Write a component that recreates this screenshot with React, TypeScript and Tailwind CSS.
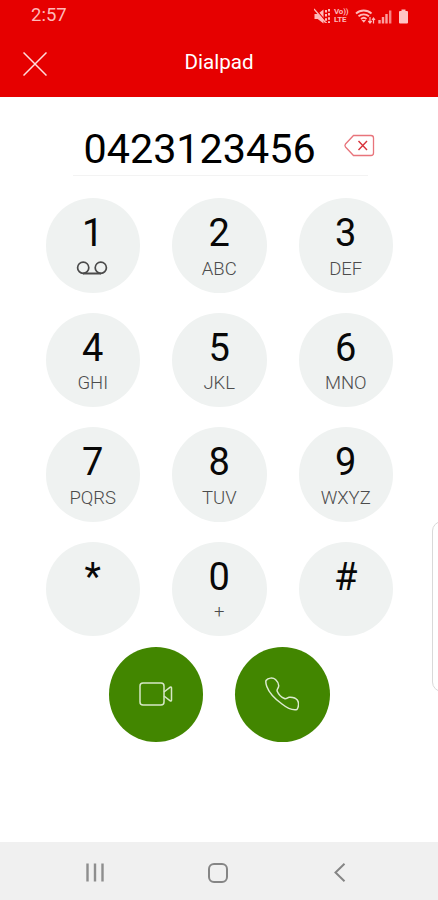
import type { ReactNode } from "react";

const keys: { digit: string; sub: ReactNode }[] = [
  { digit: "1", sub: <VoicemailIcon /> },
  { digit: "2", sub: "ABC" },
  { digit: "3", sub: "DEF" },
  { digit: "4", sub: "GHI" },
  { digit: "5", sub: "JKL" },
  { digit: "6", sub: "MNO" },
  { digit: "7", sub: "PQRS" },
  { digit: "8", sub: "TUV" },
  { digit: "9", sub: "WXYZ" },
  { digit: "*", sub: "" },
  { digit: "0", sub: "+" },
  { digit: "#", sub: "" },
];

function VoicemailIcon() {
  return (
    <svg width="32" height="14" viewBox="0 0 32 14" fill="none" stroke="#4a4a4a" strokeWidth="1.7" className="relative -top-px -left-px">
      <circle cx="7.2" cy="6.7" r="5.6" />
      <circle cx="24.8" cy="6.7" r="5.6" />
      <path d="M7 12.5h18" strokeWidth="2" />
    </svg>
  );
}

function StatusIcons() {
  return (
    <svg width="96" height="20" viewBox="0 0 96 20" fill="none" stroke="#ffb9b9" className="shrink-0">
      {/* Muted speaker */}
      <path d="M0.5 8h3.2L9.5 3.5v14L3.7 13H0.5z" fill="#ffb9b9" stroke="none" />
      <path d="M1 2.5l11 13" stroke="#e60000" strokeWidth="1.2" />
      <path d="M0 3l11.5 13.5" strokeWidth="1.3" />
      <path d="M12 4v13M15 3v14" strokeWidth="2" strokeDasharray="2.5 1.6" />
      {/* Wi-Fi */}
      <path d="M42 7.5c4.5-4 11-4 15.5 0M44.5 10.3c3-2.6 7.5-2.6 10.5 0M47 13c1.6-1.4 4-1.4 5.5 0" strokeWidth="1.8" />
      <path d="M47.5 14h4.5l-2.2 2.7z" fill="#ffb9b9" stroke="none" />
      <path d="M56 11v6M54.3 15l1.7 2 1.7-2M59.5 17.5v-5M58 14l1.5-2 1.5 2" strokeWidth="1.2" />
      {/* Signal */}
      <path d="M65.5 17.5v-3.5M69 17.5v-6.5M72.5 17.5v-9.5" strokeWidth="2.4" opacity="0.85" />
      <path d="M76.2 17.5v-13" strokeWidth="2.4" opacity="0.7" />
      {/* Battery */}
      <path d="M87.5 3.5h4v1.5h1.5q1 0 1 1v10.5q0 1-1 1h-7q-1 0-1-1v-10.5q0-1 1-1h1.5z" fill="#ffc4c4" stroke="none" />
    </svg>
  );
}

function DialKey({ digit, sub }: { digit: string; sub: ReactNode }) {
  return (
    <button className="flex size-[94.5px] flex-col items-center rounded-full bg-[#eff2f1] pt-[16px]">
      <span className="text-[38px] leading-[38px] text-[#080808]">{digit}</span>
      <span className="mt-[6.5px] flex h-5 items-center text-[18.5px] leading-5 font-light text-[#4c4c4c]">
        {sub}
      </span>
    </button>
  );
}

export default function App() {
  return (
    <div className="flex h-[900px] w-[438px] flex-col overflow-hidden bg-white font-[Roboto,sans-serif]">
      <header className="h-[97px] bg-[#e60000]">
        <div className="flex h-8 items-center justify-between pr-[28px] pl-[31px]">
          <span className="-mt-px text-[18.5px] leading-none text-[#ffb9b9]">2:57</span>
          <div className="relative">
            <StatusIcons />
            <div className="absolute top-[2px] left-[20px] flex w-4 flex-col text-[8px] leading-[8px] font-bold tracking-[-0.2px] text-[#ffb9b9]">
              <span>Vo))</span>
              <span>LTE</span>
            </div>
          </div>
        </div>
        <div className="grid h-[60px] grid-cols-[60px_1fr_60px] items-center">
          <svg width="24" height="24" viewBox="0 0 24 24" className="mt-1 ml-[23px]" stroke="#ffdcdc" strokeWidth="1.5">
            <path d="M0.5 0.5l23 23M23.5 0.5l-23 23" />
          </svg>
          <h1 className="-mt-px text-center text-[20.6px] leading-6 font-normal text-white">Dialpad</h1>
        </div>
      </header>

      <main className="flex flex-1 flex-col">
        <div className="mx-[73px] mt-[25px] flex h-[54px] w-[295px] items-center justify-between border-b-[1.5px] border-[#f3f3f3] pl-[10.5px]">
          <span className="pt-px text-[41.3px] leading-[54px] text-black">0423123456</span>
          <svg width="32" height="24" viewBox="0 0 32 24" fill="none" className="relative -top-[3px] left-[7px]">
            <path d="M10.5 1.5H28q2.5 0 2.5 2.5v15q0 2.5-2.5 2.5H10.5L2.5 13q-1.2-1.5 0-3z" stroke="#e8747b" strokeWidth="1.3" />
            <path d="M15.5 7l8.5 9M24 7l-8.5 9" stroke="#d8333b" strokeWidth="1.4" />
          </svg>
        </div>

        <div className="mt-[22px] ml-[45.5px] grid w-[347.5px] grid-cols-3 justify-between gap-x-8 gap-y-5">
          {keys.map((key) => (
            <DialKey key={key.digit} digit={key.digit} sub={key.sub} />
          ))}
        </div>

        <div className="mt-[11px] flex justify-center gap-8">
          <button className="flex size-[94.5px] items-center justify-center rounded-full bg-[#428600]">
            <svg width="34" height="24" viewBox="0 0 34 24" fill="none" stroke="#d6e8c6" strokeWidth="1.5" strokeLinejoin="round">
              <rect x="1" y="1" width="24" height="22" rx="3" />
              <path d="M25 10l6.2-4.8q1.3-.7 1.3.8v12q0 1.5-1.3.8L25 14" />
            </svg>
          </button>
          <button className="flex size-[94.5px] items-center justify-center rounded-full bg-[#428600]">
            <svg width="34" height="34" viewBox="0 0 34 34" fill="none" stroke="#dcebcf" strokeWidth="1.5" strokeLinejoin="round">
              <path d="M1 3.5C3 .7 8 .3 10.5 2.5c2.3 2.2 3.7 5 3 7.5-.5 1.7-2 2.5-1.3 4.2 1.5 3.5 4 6 7.3 7.3 2 .8 2.7-1 4.8-1.2 3-.2 6.500.7 8.200 3 1.500 2.500 1 6.500-.5 9.200-4.500.8-10-1.500-15-5.500C10 22 4 15.500 1.800 9.500 1 7.200.5 5.200 1 3.500z" />
            </svg>
          </button>
        </div>
      </main>

      <nav className="flex h-[58px] items-center bg-[#f0f0f0] pt-[3px] pl-[86px]">
        <svg width="19" height="19" viewBox="0 0 19 19" stroke="#8e8e8e" strokeWidth="2.4">
          <path d="M1.5 0.5v18M9 0.5v18M16.5 0.5v18" />
        </svg>
        <div className="ml-[102.5px] size-5 rounded-[6px] border-2 border-[#858585]" />
        <svg width="12" height="19" viewBox="0 0 12 19" fill="none" stroke="#858585" strokeWidth="2" className="ml-[106px]">
          <path d="M10.5 0.8L1.5 9.5l9 8.7" />
        </svg>
      </nav>

      {/* Edge panel handle */}
      <div className="absolute top-[521px] left-[432px] h-[171px] w-[6px] overflow-hidden">
        <div className="h-full w-5 rounded-[10px] border-[1.5px] border-[#d9d9d9] bg-white" />
      </div>
    </div>
  );
}
